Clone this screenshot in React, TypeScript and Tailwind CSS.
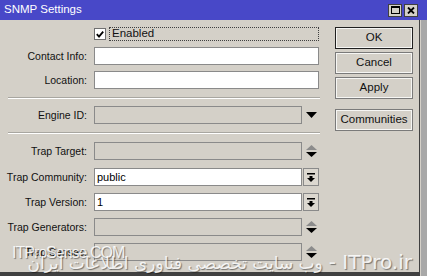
import React from "react";

const font = { fontFamily: "'Liberation Sans', Arial, sans-serif" };
const wm = { textShadow: "1px 1px 1px rgba(0,0,0,0.45)" };

function Label({ text }: { text: string }) {
  return (
    <div className="w-[88px] shrink-0 pr-[1px] text-right text-[10.5px] leading-none text-[#111]">
      {text}
    </div>
  );
}

function Field({
  label,
  value,
  disabled,
  wide,
  icon,
  className = "",
}: {
  label: string;
  value?: string;
  disabled?: boolean;
  wide?: boolean;
  icon?: React.ReactNode;
  className?: string;
}) {
  return (
    <div className={`flex h-[18px] items-center ${className}`}>
      <Label text={label} />
      <div
        className={`ml-[6px] flex h-[18px] items-center border border-[#8a8a8a] pl-[2px] text-[11px] text-black ${
          wide ? "w-[225px]" : "w-[208px]"
        } ${disabled ? "bg-[#d4d0c8]" : "bg-white"}`}
      >
        {value}
      </div>
      {icon}
    </div>
  );
}

function DownTri() {
  return (
    <div className="flex w-[18px] justify-center">
      <svg width="11" height="6" viewBox="0 0 11 6">
        <path d="M0 0h11L5.5 6z" fill="#000" />
      </svg>
    </div>
  );
}

function UpDown() {
  return (
    <div className="flex w-[18px] justify-center">
      <svg width="11" height="12" viewBox="0 0 11 12">
        <path d="M5.5 0L11 5H0z" fill="#8c8c8c" />
        <path d="M0 7h11L5.5 12z" fill="#000" />
      </svg>
    </div>
  );
}

function DropBtn() {
  return (
    <div className="ml-[1px] flex h-[18px] w-[16px] items-center justify-center border border-[#8a8a8a] bg-[#dcd8d0]">
      <svg width="8" height="9" viewBox="0 0 8 9">
        <path d="M0 0h8v1.5H0z" fill="#000" />
        <path d="M2.5 3h3v2H8L4 9 0 5h2.5z" fill="#000" />
      </svg>
    </div>
  );
}

function Btn({ text, def, className = "" }: { text: string; def?: boolean; className?: string }) {
  return (
    <div
      className={`flex h-[22px] w-[78px] items-center justify-center bg-[#d4d0c8] text-[11.5px] text-[#111] ${
        def ? "border border-[#202020]" : "border border-[#7a7a7a]"
      } ${className}`}
    >
      <div className="flex h-full w-full items-center justify-center border border-white/80">
        {text}
      </div>
    </div>
  );
}

function Sep({ className = "" }: { className?: string }) {
  return <div className={`ml-[8px] h-[2px] w-[312px] border-t border-[#a8a6a0] border-b border-b-white ${className}`} />;
}

export default function App() {
  return (
    <div className="relative h-[276px] w-[427px] overflow-hidden bg-[#d4d0c8]" style={font}>
      {/* title bar */}
      <div className="flex h-[20px] items-center bg-[#4848c8] pl-[4px] pr-[9px]">
        <span className="text-[11.5px] text-white">SNMP Settings</span>
        <div className="ml-auto flex gap-[2px]">
          <div className="flex h-[13px] w-[14px] items-center justify-center border border-[#404040] bg-[#d4d0c8]">
            <div className="h-[8px] w-[9px] border border-black border-t-2" />
          </div>
          <div className="flex h-[13px] w-[14px] items-center justify-center border border-[#404040] bg-[#d4d0c8]">
            <svg width="8" height="7" viewBox="0 0 8 7">
              <path d="M1 0.5l6 6M7 0.5l-6 6" stroke="#000" strokeWidth="1.8" />
            </svg>
          </div>
        </div>
      </div>

      <div className="flex h-[256px] w-[420px] border-b-[4px] border-[#404040]">
        {/* form column */}
        <div className="w-[320px] shrink-0">
          <div className="mt-[7px] flex h-[14px] items-center">
            <div className="ml-[94px] flex h-[12px] w-[12px] items-center justify-center border border-[#707070] bg-white">
              <svg width="8" height="7" viewBox="0 0 8 7">
                <path d="M0.8 3.2l2.2 2.4 4.2-5" stroke="#000" strokeWidth="1.8" fill="none" />
              </svg>
            </div>
            <div className="ml-[3px] flex h-[14px] w-[210px] items-center border border-dotted border-[#404040] pl-[2px] text-[11.5px] text-[#111]">
              Enabled
            </div>
          </div>
          <Field label="Contact Info:" wide className="mt-[6px]" />
          <Field label="Location:" wide className="mt-[6px]" />
          <Sep className="mt-[8px]" />
          <Field label="Engine ID:" disabled className="mt-[7px]" icon={<DownTri />} />
          <Sep className="mt-[8px]" />
          <Field label="Trap Target:" disabled className="mt-[8px]" icon={<UpDown />} />
          <Field label="Trap Community:" value="public" className="mt-[8px]" icon={<DropBtn />} />
          <Field label="Trap Version:" value="1" className="mt-[7px]" icon={<DropBtn />} />
          <Field label="Trap Generators:" disabled className="mt-[7px]" icon={<UpDown />} />
          <Field label="Trap Senses:" disabled className="mt-[7px]" icon={<UpDown />} />
        </div>

        {/* buttons */}
        <div className="ml-[15px] pt-[7px]">
          <Btn text="OK" def />
          <Btn text="Cancel" className="mt-[3px]" />
          <Btn text="Apply" className="mt-[3px]" />
          <Btn text="Communities" className="mt-[10px]" />
        </div>

        <div className="ml-auto w-[1px] bg-[#404040]" />
      </div>
      <div className="absolute right-0 top-[20px] h-[256px] w-[6px] bg-[#a8a8a8]" />

      {/* watermark */}
      <div
        className="absolute left-[12px] top-[241px] text-[16px] tracking-[-1px] text-white/85"
        style={wm}
      >
        ITProSense.COM
      </div>
      <div
        className="absolute right-[15px] top-[247px] flex items-baseline whitespace-nowrap text-white/85"
        style={{ ...wm, fontFamily: "'DejaVu Sans', sans-serif" }}
      >
        <span dir="rtl" className="text-[17px]">
          وب سایت تخصصی فناوری اطلاعات ایران
        </span>
        <span className="ml-[6px] text-[20px]">- ITPro.ir</span>
      </div>
    </div>
  );
}
